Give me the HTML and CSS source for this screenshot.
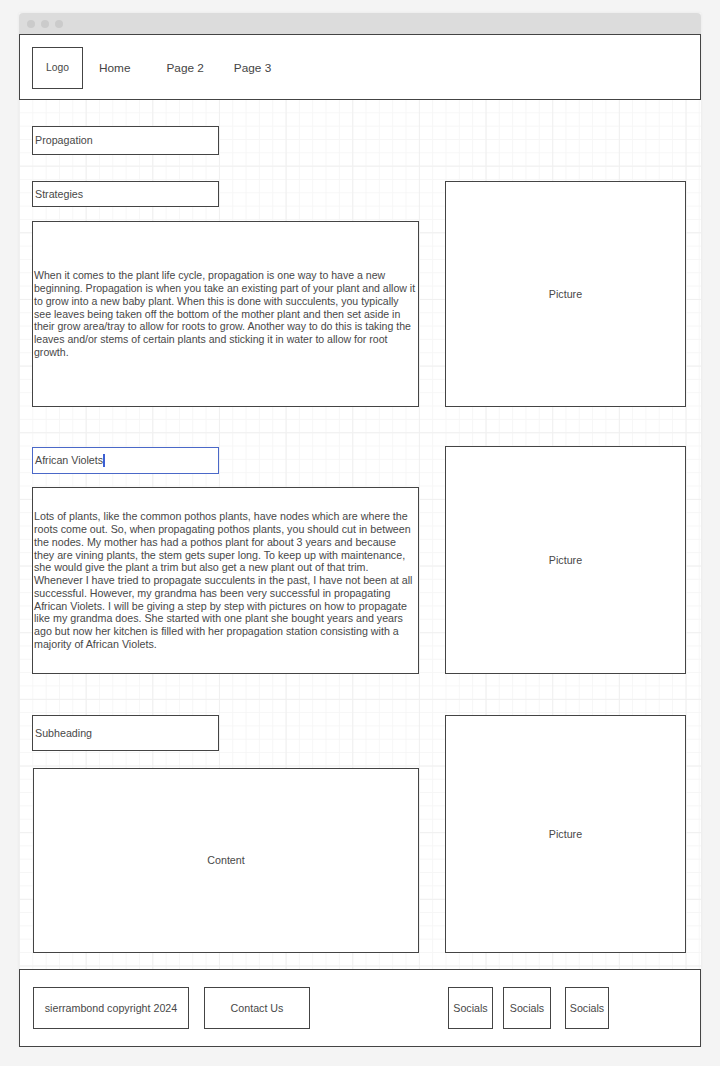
FILE: index.html
```html
<!DOCTYPE html>
<html lang="en">
<head>
    <meta charset="UTF-8">
    <meta name="viewport" content="width=device-width, initial-scale=1.0">
    <title>Propagation - Wireframe</title>
    <link rel="stylesheet" href="styles.css">
</head>
<body>

    <div class="window">
        <div class="titlebar">
            <span class="dot"></span>
            <span class="dot"></span>
            <span class="dot"></span>
        </div>

        <header class="header">
            <div class="box logo">Logo</div>
            <nav class="nav">
                <a class="nav-home">Home</a>
                <a class="nav-page2">Page 2</a>
                <a class="nav-page3">Page 3</a>
            </nav>
        </header>

        <main class="canvas">
            <div class="box title">Propagation</div>

            <section class="row row-1">
                <div class="col">
                    <div class="box heading heading-1">Strategies</div>
                    <div class="box text text-1">When it comes to the plant life cycle, propagation is one way to have a new beginning. Propagation is when you take an existing part of your plant and allow it to grow into a new baby plant. When this is done with succulents, you typically see leaves being taken off the bottom of the mother plant and then set aside in their grow area/tray to allow for roots to grow. Another way to do this is taking the leaves and/or stems of certain plants and sticking it in water to allow for root growth.</div>
                </div>
                <div class="box picture">Picture</div>
            </section>

            <section class="row row-2">
                <div class="col">
                    <div class="box heading heading-2 selected">African Violets<span class="cursor"></span></div>
                    <div class="box text text-2">Lots of plants, like the common pothos plants, have nodes which are where the roots come out. So, when propagating pothos plants, you should cut in between the nodes. My mother has had a pothos plant for about 3 years and because they are vining plants, the stem gets super long. To keep up with maintenance, she would give the plant a trim but also get a new plant out of that trim. Whenever I have tried to propagate succulents in the past, I have not been at all successful. However, my grandma has been very successful in propagating African Violets. I will be giving a step by step with pictures on how to propagate like my grandma does. She started with one plant she bought years and years ago but now her kitchen is filled with her propagation station consisting with a majority of African Violets.</div>
                </div>
                <div class="box picture">Picture</div>
            </section>

            <section class="row row-3">
                <div class="col">
                    <div class="box heading heading-3">Subheading</div>
                    <div class="box text text-3 centered">Content</div>
                </div>
                <div class="box picture">Picture</div>
            </section>
        </main>

        <footer class="footer">
            <div class="box centered copyright">sierrambond copyright 2024</div>
            <div class="box centered contact">Contact Us</div>
            <div class="socials">
                <div class="box centered social social-1">Socials</div>
                <div class="box centered social social-2">Socials</div>
                <div class="box centered social social-3">Socials</div>
            </div>
        </footer>
    </div>

</body>
</html>
```

FILE: styles.css
```css
* {
    box-sizing: border-box;
}
body {
    margin: 0;
    padding-top: 13px;
    background-color: #f4f4f4;
    font-family: "Liberation Sans", Arial, Helvetica, sans-serif;
    color: #484848;
}
.window {
    width: 682px;
    margin-left: 19px;
    box-shadow: 0px 0px 3px rgba(0, 0, 0, 0.06);
}
.titlebar {
    height: 21px;
    background-color: #dcdcdc;
    border-radius: 4px 4px 0 0;
    display: flex;
    align-items: center;
    padding-left: 8px;
    gap: 6px;
}
.dot {
    width: 8px;
    height: 8px;
    border-radius: 50%;
    background-color: #cbcbcb;
}
.box {
    border: 1px solid #444;
    background: white;
    font-size: 10.7px;
    line-height: 1.2;
}
.centered {
    display: flex;
    align-items: center;
    justify-content: center;
    text-align: center;
}

/* header */
.header {
    height: 66px;
    border: 1px solid #444;
    background: white;
    display: flex;
    align-items: flex-start;
    padding: 12px 0 0 12px;
}
.logo {
    width: 51px;
    height: 42px;
    font-size: 10.3px;
    display: flex;
    align-items: center;
    justify-content: center;
    padding-top: 1px;
}
.nav {
    display: flex;
    height: 42px;
    align-items: center;
    font-size: 11.8px;
    color: #444;
}
.nav a {
    cursor: pointer;
}
.nav-home {
    margin-left: 16px;
}
.nav-page2 {
    margin-left: 36px;
}
.nav-page3 {
    margin-left: 30px;
}

/* canvas with grid */
.canvas {
    height: 869px;
    padding: 26px 0 0 13px;
    background-color: #fff;
    background-image:
        linear-gradient(#f0f0f0 1px, transparent 1px),
        linear-gradient(90deg, #f0f0f0 1px, transparent 1px),
        linear-gradient(#f6f6f6 1px, transparent 1px),
        linear-gradient(90deg, #f6f6f6 1px, transparent 1px);
    background-size: 66.667px 66.667px, 66.667px 66.667px, 13.333px 13.333px, 13.333px 13.333px;
    background-position: 0 -1px;
}
.title,
.heading {
    width: 187px;
    display: flex;
    align-items: center;
    padding-left: 2px;
}
.title {
    height: 29px;
    margin-bottom: 26px;
}
.row {
    display: flex;
    align-items: flex-start;
}
.col {
    width: 387px;
    margin-right: 26px;
}
.text {
    width: 387px;
    display: flex;
    align-items: center;
    padding: 0 1px 0 1px;
    font-size: 10.55px;
    line-height: 12.9px;
}
.picture {
    width: 241px;
    display: flex;
    align-items: center;
    justify-content: center;
}

.row-1 .picture {
    height: 226px;
}
.heading-1 {
    height: 26px;
    margin-bottom: 14px;
}
.text-1 {
    height: 186px;
}

.row-2 {
    margin-top: 39px;
}
.row-2 .picture {
    height: 228px;
}
.heading-2 {
    height: 27px;
    margin-top: 1px;
    margin-bottom: 13px;
}
.text-2 {
    height: 187px;
    font-size: 10.7px;
    line-height: 12.8px;
}
.selected {
    border-color: #4a68c8;
}
.cursor {
    display: inline-block;
    width: 2px;
    height: 13px;
    background-color: #3c5fd4;
}

.row-3 {
    margin-top: 41px;
}
.row-3 .picture {
    height: 238px;
}
.heading-3 {
    height: 36px;
    margin-bottom: 17px;
}
.text-3 {
    width: 386px;
    height: 185px;
    margin-left: 1px;
    justify-content: center;
    font-size: 10.7px;
}

/* footer */
.footer {
    height: 78px;
    border: 1px solid #444;
    background: white;
    display: flex;
    align-items: flex-start;
    padding: 17px 0 0 13px;
}
.footer .box {
    height: 42px;
}
.copyright {
    width: 156px;
}
.contact {
    width: 106px;
    margin-left: 15px;
}
.socials {
    display: flex;
    margin-left: 138px;
}
.social-1 {
    width: 45px;
}
.social-2 {
    width: 48px;
    margin-left: 10px;
}
.social-3 {
    width: 44px;
    margin-left: 14px;
}
```
